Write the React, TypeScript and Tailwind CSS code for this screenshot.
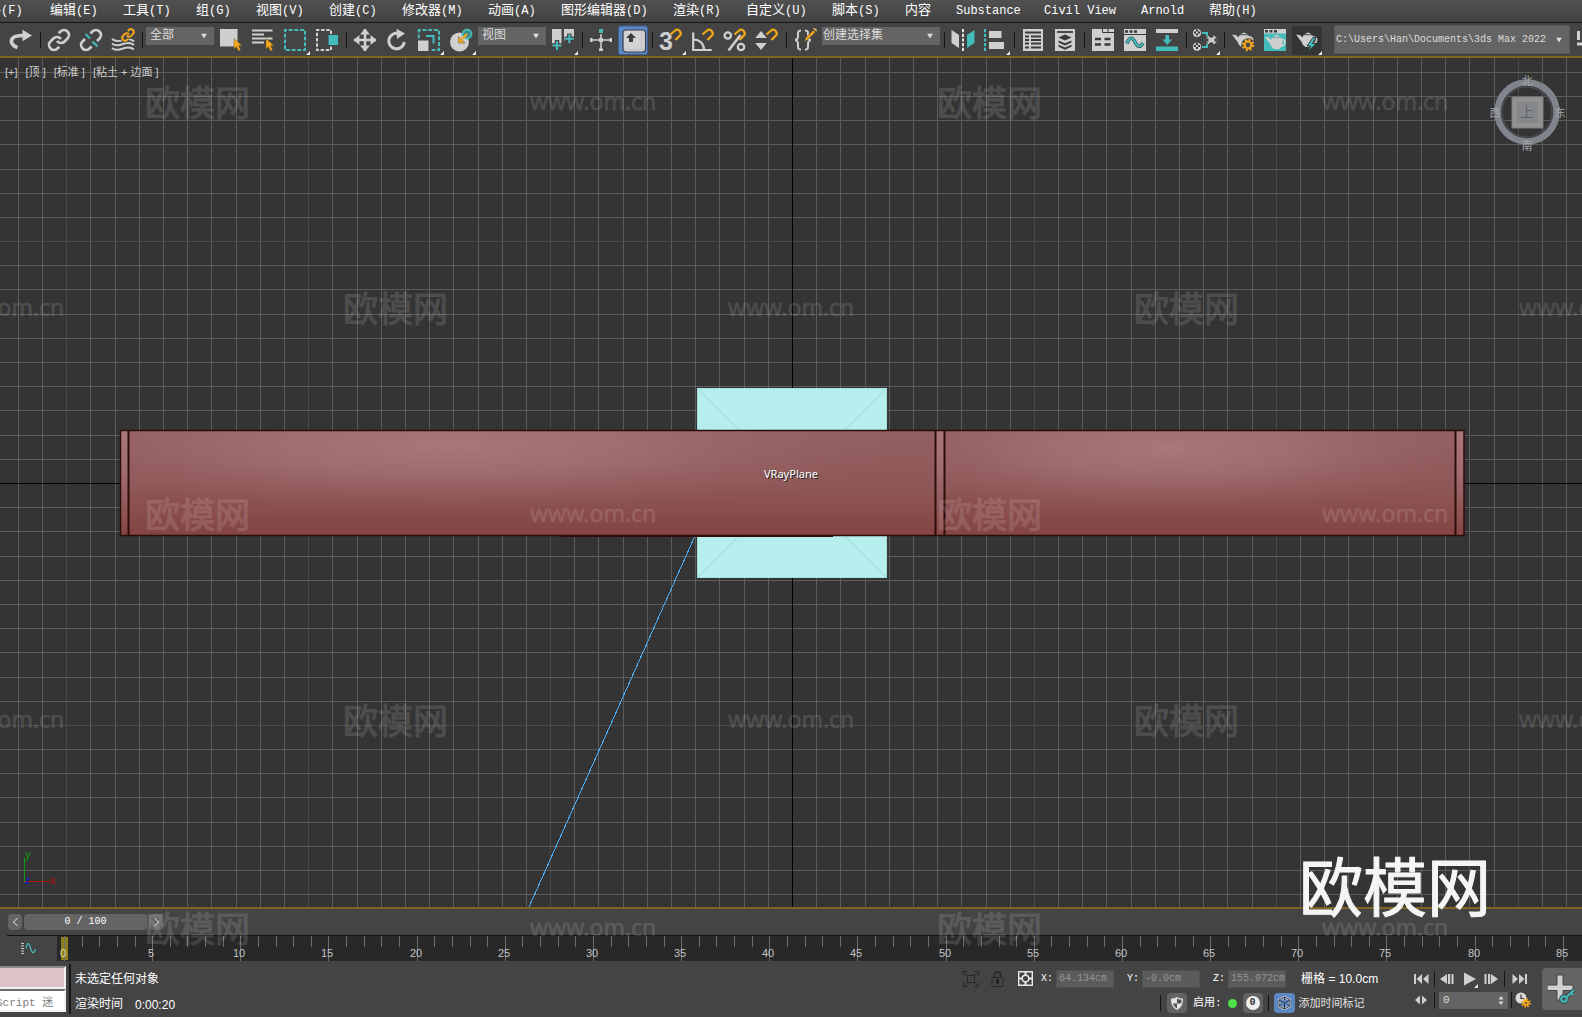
import { useState } from "react";
import type { ReactNode } from "react";
import clsx from "clsx";

const menus = [
  { label: "编辑", key: "(E)", width: "w-[73px]" },
  { label: "工具", key: "(T)", width: "w-[73px]" },
  { label: "组", key: "(G)", width: "w-[60px]" },
  { label: "视图", key: "(V)", width: "w-[73px]" },
  { label: "创建", key: "(C)", width: "w-[73px]" },
  { label: "修改器", key: "(M)", width: "w-[86px]" },
  { label: "动画", key: "(A)", width: "w-[73px]" },
  { label: "图形编辑器", key: "(D)", width: "w-[112px]" },
  { label: "渲染", key: "(R)", width: "w-[73px]" },
  { label: "自定义", key: "(U)", width: "w-[86px]" },
  { label: "脚本", key: "(S)", width: "w-[73px]" },
  { label: "内容", key: "", width: "w-[51px]" },
  { label: "", key: "Substance", width: "w-[88px]" },
  { label: "", key: "Civil View", width: "w-[97px]" },
  { label: "", key: "Arnold", width: "w-[68px]" },
  { label: "帮助", key: "(H)", width: "w-[73px]" },
];

const G = "#cfcfcf";
const T = "#45bcbc";
const O = "#f5a81c";
const D = "#3a3a3a";

type ToolProps = {
  label: string;
  children: ReactNode;
  flyout?: boolean;
  className?: string;
};

function Tool({ label, children, flyout, className }: ToolProps) {
  return (
    <button type="button" aria-label={label} title={label} className={clsx("h-8 w-8 shrink-0", className)}>
      <svg viewBox="0 0 32 32" className="block h-8 w-8" fill="none">
        {children}
        {flyout && <path d="M31 27v4h-4z" fill="#e8e8e8" />}
      </svg>
    </button>
  );
}

function Sep() {
  return (
    <div className="flex w-[6px] shrink-0 justify-center">
      <div className="h-4 w-px bg-[#151515]" />
    </div>
  );
}

type PickerProps = { label: string; value: string; className: string; selectClass: string };

function Picker({ label, value, className, selectClass }: PickerProps) {
  return (
    <div className={clsx("relative bg-[#646464]", className)}>
      <select aria-label={label} className={clsx("block h-full w-full appearance-none text-[#dcdcdc] outline-none", selectClass)}>
        <option>{value}</option>
      </select>
      <svg viewBox="0 0 6 5" className="pointer-events-none absolute top-1/2 right-[7px] h-[5px] w-[6px] -translate-y-1/2">
        <path d="M0 0h6l-3 5z" fill="#dedede" />
      </svg>
    </div>
  );
}

function Magnet() {
  return (
    <g>
      <path d="M15.5 10.500l4.600-4a3.500 3.500 0 0 1 4.800 5L20.500 16" stroke="#444" strokeWidth="4" />
      <path d="M15.5 10.500l4.600-4a3.500 3.500 0 0 1 4.800 5L20.500 16" stroke={O} strokeWidth="2.200" />
    </g>
  );
}

function Cursor() {
  return <path d="M19 14.5v10.2l2.4-2 2 4.4 2.3-1.1-2-4.3h3.3z" fill={O} stroke="#5a4a20" strokeWidth=".4" />;
}

function ChainLink() {
  return (
    <>
      <path d="M10 13a5 5 0 0 0 7.54.54l3-3a5 5 0 0 0-7.07-7.07l-1.72 1.71" />
      <path d="M14 11a5 5 0 0 0-7.54-.54l-3 3a5 5 0 0 0 7.07 7.07l1.71-1.71" />
    </>
  );
}

// drawn in a 22x16 box
function Teapot() {
  return (
    <g fill={G}>
      <path d="M0 2.5l4.300.7c.8 1 1.400 1.800 2 2.300C6.600 4.500 7.200 3.700 8 3h8c3 3.500 3 8-1 12H9.500C7 13.400 5.800 11.400 5.300 9.200 3.300 8 2.300 5 0 2.500z" />
      <path d="M16.500 5.500c5.500-2 5.500 6.500-.5 6.500" fill="none" stroke={G} strokeWidth="1.800" />
      <path d="M8.500 2.300C9.500 1.500 10.300 1 11.300.9a1 1 0 0 1 1.600 0c1 .1 1.800.6 2.600 1.400z" />
      <path d="M8 3.200h8" stroke="#8a8a8a" strokeWidth=".6" />
    </g>
  );
}

function Gear({ cx, cy, r }: { cx: number; cy: number; r: number }) {
  return (
    <g>
      <circle cx={cx} cy={cy} r={r} stroke={O} strokeWidth="2.4" strokeDasharray={`${(Math.PI * r) / 8} ${(Math.PI * r) / 8}`} />
      <circle cx={cx} cy={cy} r={r - 1.6} stroke={O} strokeWidth="2" fill="#4a4a4a" />
    </g>
  );
}

function MenuBar() {
  return (
    <nav className="flex h-[22px] shrink-0 items-center overflow-hidden bg-linear-to-b from-[#505050] to-[#424242] pb-[2px] text-white">
      <button type="button" className="-ml-3 w-[62px] shrink-0 text-left leading-5 whitespace-nowrap">
        <span className="text-[13px]">件</span>
        <span className="text-xs">(F)</span>
      </button>
      {menus.map((m) => (
        <button key={m.label + m.key} type="button" className={clsx("shrink-0 text-left leading-5 whitespace-nowrap", m.width)}>
          {m.label && <span className="text-[13px]">{m.label}</span>}
          {m.key && <span className="text-xs">{m.key}</span>}
        </button>
      ))}
    </nav>
  );
}

function Toolbar() {
  return (
    <div className="flex h-[34px] shrink-0 items-center overflow-hidden border-t border-[#161616] bg-[#444444] pl-[5px]">
      <Tool label="重做">
        <path d="M12.5 23.5C6 21.5 5 16.5 8 13.8c2-1.8 4-2.3 10-2.3" stroke={G} strokeWidth="3.6" />
        <path d="M17.5 5.8l9.5 5.7-9.5 5.7z" fill={G} />
      </Tool>
      <Sep />
      <Tool label="链接">
        <g transform="translate(4 4)" stroke={G} strokeWidth="2.7"><ChainLink /></g>
      </Tool>
      <Tool label="取消链接">
        <g transform="translate(4 4)" stroke={G} strokeWidth="2.7">
          <path d="M18 13l2.5-2.5a5 5 0 0 0-7.07-7.07l-2 2M6 11l-2.5 2.5a5 5 0 0 0 7.07 7.07l2-2" />
        </g>
        <path d="M10.500 10l4.500 4.500M17.500 17.500l5 5" stroke={T} strokeWidth="2" />
      </Tool>
      <Tool label="绑定到空间扭曲">
        <g stroke={G} strokeWidth="1.9">
          <path d="M5 15c3.500 3 7 2 10 1.500s8-3 12 1" />
          <path d="M5 19.500c3.500 3 7 2 11 .5s8-1.500 11 1" />
          <path d="M5 24c3.500 3 7 2 11 .5s8-1.500 11 1" />
        </g>
        <g transform="translate(14 4) scale(.58)" stroke="#444" strokeWidth="6"><ChainLink /></g>
        <g transform="translate(14 4) scale(.58)" stroke={O} strokeWidth="3.4"><ChainLink /></g>
      </Tool>
      <Sep />
      <Picker label="选择过滤器" value="全部" className="mx-px mt-1 h-[18px] w-[68px] shrink-0 self-start" selectClass="pl-1 pr-4 text-xs" />
      <Tool label="选择对象">
        <path d="M5 5h17.500v17.500H5z" fill={G} />
        <Cursor />
      </Tool>
      <Tool label="按名称选择">
        <path d="M5 6.500h20.500M5 10.500h12M5 14.500h20.500M5 18.500h12" stroke={G} strokeWidth="2" />
        <Cursor />
      </Tool>
      <Tool label="矩形选择区域" flyout>
        <path d="M6 6h20v20H6z" stroke={T} strokeWidth="2" strokeDasharray="4 1.71" strokeDashoffset="2" />
      </Tool>
      <Tool label="窗口/交叉">
        <path d="M20 10V6H6v20h14v-4" stroke={G} strokeWidth="2" strokeDasharray="3.5 1.7" />
        <path d="M17.500 11h9.500v10h-9.500z" fill={T} />
      </Tool>
      <Sep />
      <Tool label="选择并移动">
        <path d="M16 5v22M5 16h22" stroke={G} strokeWidth="2.6" />
        <path d="M16 4.500l5 6H11zM16 27.500l5-6H11zM4.500 16l6-5v10zM27.500 16l-6-5v10z" fill={G} />
      </Tool>
      <Tool label="选择并旋转">
        <path d="M17.500 9.500A7.800 7.800 0 1 0 23.300 18" stroke={G} strokeWidth="3" />
        <path d="M15.500 4.800l8.500 4.700-8 5.500z" fill={G} />
      </Tool>
      <Tool label="选择并缩放" flyout>
        <path d="M5.800 6h20.200v20H5.800z" stroke={T} strokeWidth="2" strokeDasharray="4 1.71" strokeDashoffset="2" />
        <path d="M4 15h13v13H4z" fill="#444" />
        <path d="M5 16.500h10.500v10.500H5z" fill={G} />
        <path d="M13 12h7.500v7.500" stroke={T} strokeWidth="2" />
      </Tool>
      <Tool label="选择并放置" flyout>
        <circle cx="14.500" cy="18" r="9.500" fill={G} />
        <circle cx="22" cy="10" r="4.500" fill="#3c8b8b" stroke={T} strokeWidth="1.8" />
        <path d="M22 10l-5 5" stroke={O} strokeWidth="2.400" />
        <path d="M13.500 12.500v6.500H20z" fill={O} stroke="#6b5320" strokeWidth=".5" />
      </Tool>
      <Picker label="参考坐标系" value="视图" className="mx-px mt-1 h-[18px] w-[68px] shrink-0 self-start" selectClass="pl-1 pr-4 text-xs" />
      <Tool label="使用轴点中心" flyout>
        <path d="M5 5h9.500v15H5zM17 5h10v12H17z" fill={G} />
        <path d="M10 16v11M5 21.500h10M22.300 9.500v10.500M17.500 14.700h10" stroke="#444" strokeWidth="4.5" />
        <path d="M10 17v9M5.500 21.500h9M22.300 10.200v9M17.800 14.700h9" stroke={T} strokeWidth="2" />
      </Tool>
      <Sep />
      <Tool label="选择并操纵">
        <path d="M16 10v16M6 16h20" stroke={G} strokeWidth="1.6" />
        <path d="M5 14h2.500v4H5zM24.500 14h2.500v4h-2.500zM14 24.500h4V27h-4zM14 14h4v4h-4z" fill={G} />
        <path d="M14 5h4v4h-4z" fill={T} />
      </Tool>
      <Tool label="键盘快捷键覆盖切换">
        <rect x="1.5" y="2" width="29" height="28.5" rx="2" fill="#5b87c3" stroke="#3d5f92" />
        <rect x="6" y="6" width="22.5" height="22" rx="3" fill="#d2d2d2" stroke="#3a3f48" strokeWidth="1.2" />
        <path d="M7 24.500c4 2 16 2 20.500 0M24.500 7v18" stroke="#bcbcbc" />
        <path d="M14 9l5 5h-3v4h-4v-4H9z" fill="#3b3b3b" />
      </Tool>
      <Sep />
      <Tool label="捕捉开关" flyout>
        <text x="4" y="26" className="font-['Liberation_Sans',sans-serif] text-[25px] font-bold" fill={G}>3</text>
        <Magnet />
      </Tool>
      <Tool label="角度捕捉">
        <path d="M6.200 8.500V26h18.500M6.500 15.500C13 15.500 17 20 17 26" stroke={G} strokeWidth="2.2" />
        <Magnet />
      </Tool>
      <Tool label="百分比捕捉">
        <circle cx="8.8" cy="11.5" r="3.2" stroke={G} strokeWidth="2.3" />
        <circle cx="22" cy="23" r="3.2" stroke={G} strokeWidth="2.3" />
        <Magnet />
        <path d="M21.500 11L9.500 26.500" stroke={G} strokeWidth="2.6" />
      </Tool>
      <Tool label="微调器捕捉">
        <path d="M10 7l5.800 7H4.200zM10 26l5.800-7H4.200z" fill={G} />
        <Magnet />
      </Tool>
      <Sep />
      <Tool label="编辑命名选择集">
        <path d="M12 6.500c-3.500 0-3 2-3 5s-.5 4.500-3 4.500c2.500 0 3 1.500 3 4.500s-.5 5 3 5M16 6.500c3.500 0 3 2 3 5s.5 4.500 3 4.500c-2.500 0-3 1.500-3 4.500s.5 5-3 5" stroke={G} strokeWidth="2" />
        <path d="M15.500 17.500l1-3.500 8-8 2 2-8 8z" fill={O} stroke="#444" strokeWidth=".6" />
        <path d="M24 4.500l3.500 3 .5-1.500-2.500-2z" fill="#f7c86a" />
      </Tool>
      <Picker label="命名选择集" value="创建选择集" className="mx-px mt-1 h-[18px] w-[118px] shrink-0 self-start" selectClass="pl-px pr-4 text-xs" />
      <Sep />
      <Tool label="镜像">
        <path d="M4.500 6l7.500 5v13l-7.500-5z" fill={G} />
        <path d="M27.500 6L20 11v13l7.500-5z" fill={T} />
        <path d="M16 5v22" stroke="#e4e4e4" strokeWidth="2" strokeDasharray="3.2 1.5" />
      </Tool>
      <Tool label="对齐" flyout>
        <path d="M6 5v22" stroke={T} strokeWidth="2" strokeDasharray="3.2 1.5" />
        <path d="M10 7h12.500v7H10zM10 18h15v7H10z" fill={G} />
      </Tool>
      <Sep />
      <Tool label="场景资源管理器">
        <path d="M6 5h20v22H6z" fill={G} />
        <path d="M8 8.500h16M8 12.500h4M14 12.500h10M8 16h4M14 16h10M8 19.500h4M14 19.500h10M8 23.500h4M14 23.500h10" stroke={D} strokeWidth="1.8" />
      </Tool>
      <Tool label="层资源管理器">
        <path d="M6 5h20v22H6z" fill={G} />
        <path d="M8 8h16" stroke={D} strokeWidth="1.8" />
        <path d="M16 10.500l6.500 3-6.500 3-6.500-3zM9.500 16.500l6.500 2.700 6.500-2.700v2L16 21.500l-6.500-3zM9.500 20.800l6.500 2.700 6.500-2.700v2L16 25.800l-6.500-3z" fill={D} />
      </Tool>
      <Sep />
      <Tool label="切换功能区">
        <path d="M5 5h22v22H5z" fill={G} />
        <path d="M15.500 4v4.500H27M21 4v4.500" stroke={D} />
        <path d="M8 15h6M17.500 15h6M8 20.500h6M17.500 20.500h6" stroke={D} strokeWidth="2.6" />
      </Tool>
      <Tool label="曲线编辑器">
        <path d="M5 5h22v22H5z" fill={G} />
        <path d="M6 7.500h3M10.500 7.500h3M15 7.500h3" stroke={D} strokeWidth="2.6" />
        <path d="M5 10.500h22" stroke={D} />
        <path d="M8 19.500c2.500-7 5.500-6.500 8-1.500s5 6 8 1" stroke="#2d5858" strokeWidth="3.6" />
        <path d="M8 19.500c2.500-7 5.500-6.500 8-1.500s5 6 8 1" stroke={T} strokeWidth="2" />
      </Tool>
      <Tool label="图解视图">
        <path d="M5 5h22v4H5z" fill={G} />
        <path d="M5 22.500h22V27H5z" fill={T} />
        <path d="M14.500 11h3.500v4.500h3L16.200 21l-4.700-5.500h3z" fill={T} />
      </Tool>
      <Sep />
      <Tool label="材质编辑器" flyout>
        <path d="M13 9h5v3.500M13 23h5v-3.500" stroke={T} strokeWidth="2" />
        <circle cx="8" cy="9" r="4" fill={G} />
        <circle cx="8" cy="22.700" r="4" fill={G} />
        <circle cx="22.500" cy="16" r="5" fill={G} />
        <path d="M5 7.500h2v2H5zM9 7.500h2v2H9zM7 5.500h2v2H7zM7 9.500h2v2H7zM5 21h2v2H5zM9 21h2v2H9zM7 19h2v2H7zM7 23h2v2H7zM20.300 11h4v2.500h-4zM20.300 18.500h4V21h-4zM17.500 14.500h2v3h-2zM25.500 14.500h2v3h-2z" fill={D} />
      </Tool>
      <Sep />
      <Tool label="渲染设置">
        <g transform="translate(5 8)"><Teapot /></g>
        <circle cx="21" cy="21" r="6.800" fill="#444" />
        <Gear cx={21} cy={21} r={5} />
      </Tool>
      <Tool label="渲染帧窗口">
        <path d="M5 5h22v22H5z" fill={T} />
        <path d="M5 5h22v4.500H5z" fill={G} />
        <path d="M6 7.200h3M10.500 7.200h3M15 7.200h3" stroke={D} strokeWidth="2.6" />
        <g transform="translate(6 10.500) scale(.97)"><Teapot /></g>
      </Tool>
      <Tool label="渲染产品" flyout>
        <rect x="1" y="2" width="30" height="29" rx="2" fill="#343434" />
        <g transform="translate(5 8)"><Teapot /></g>
        <path d="M22 13.500l-6 8.500h3.500l-2.500 5.500 8.500-8h-4l3.500-6z" fill={T} stroke="#343434" strokeWidth="1" />
      </Tool>
      <div className="mr-[3px] ml-[3px] h-[27px] w-[5px] shrink-0 bg-[radial-gradient(#9c9c9c_45%,transparent_50%)] bg-size-[2px_2px]" />
      <Picker label="项目文件夹" value="C:\Users\Han\Documents\3ds Max 2022" className="h-[29px] min-w-0 flex-1 border border-[#575757]" selectClass="pl-px pr-2 text-[10px]" />
      <button type="button" aria-label="设置项目" className="ml-1 h-8 w-2 shrink-0 overflow-hidden">
        <svg viewBox="0 0 8 32" className="h-8 w-2" fill="none">
          <path d="M4.500 7v9M3 20h5" stroke={G} strokeWidth="3" />
        </svg>
      </button>
    </div>
  );
}

// the home grid is 24.19px, measured from the world origin at 792,483
const ORIGIN_X = 792;
const ORIGIN_Y = 483;
const CELL = 24.19;
const columns = Array.from({ length: 65 }, (_, i) => i - 32);
const rows = Array.from({ length: 35 }, (_, i) => i - 17);

function GridLines() {
  return (
    <g shapeRendering="crispEdges">
      {columns.filter((n) => n !== 0).map((n) => (
        <rect key={n} x={Math.round(ORIGIN_X + n * CELL)} y="58" width="1" height="849" fill={n % 10 === 0 ? "#4a4a4a" : "#5c5c5c"} />
      ))}
      {rows.filter((n) => n !== 0).map((n) => (
        <rect key={n} x="0" y={Math.round(ORIGIN_Y + n * CELL)} width="1582" height="1" fill={n % 10 === 0 ? "#4a4a4a" : "#5c5c5c"} />
      ))}
      <rect x={ORIGIN_X} y="58" width="1" height="849" fill="#000" />
      <rect x="0" y={ORIGIN_Y} width="1582" height="1" fill="#000" />
    </g>
  );
}

function Scene() {
  return (
    <svg viewBox="0 58 1582 849" preserveAspectRatio="xMidYMid slice" className="block h-full w-full">
      <defs>
        <linearGradient id="body" x1="0" y1="0" x2="0" y2="1">
          <stop offset="0" stopColor="#936061" />
          <stop offset=".5" stopColor="#8f5858" />
          <stop offset=".85" stopColor="#874a49" />
          <stop offset="1" stopColor="#834542" />
        </linearGradient>
        <linearGradient id="edge" x1="0" y1="0" x2="0" y2="1">
          <stop offset="0" stopColor="#aa777a" />
          <stop offset=".4" stopColor="#a06c6e" />
          <stop offset="1" stopColor="#844543" />
        </linearGradient>
        <radialGradient id="shine">
          <stop offset="0" stopColor="#a87779" />
          <stop offset=".4" stopColor="#a37073" stopOpacity=".8" />
          <stop offset="1" stopColor="#966062" stopOpacity="0" />
        </radialGradient>
        <clipPath id="left"><path d="M129 431h806v105H129z" /></clipPath>
        <clipPath id="right"><path d="M945 431h510v105H945z" /></clipPath>
      </defs>
      <GridLines />
      <path d="M697 388h190v190H697z" fill="#b5eeec" />
      <path d="M697 388l190 190M887 388L697 578" stroke="#a2dcda" strokeWidth="1" />
      <path d="M697.500 388v190M886.500 388v190M697 388.500h190M697 577.500h190" stroke="#a4e3e0" />
      <path d="M694.500 537L529 907" stroke="#4ab0f7" shapeRendering="crispEdges" />
      <g>
        <path d="M120 430h1344v106H120z" fill="url(#body)" />
        <ellipse cx="450" cy="446" rx="460" ry="66" fill="url(#shine)" clipPath="url(#left)" />
        <ellipse cx="1170" cy="448" rx="320" ry="66" fill="url(#shine)" clipPath="url(#right)" />
        <path d="M120 430h8v106h-8zM936 430h8v106h-8zM1456 430h8v106h-8z" fill="url(#edge)" />
        <path d="M120.500 430.500h1343.500v105h-1343.500z" fill="none" stroke="#2c0d0c" strokeWidth="1.500" />
        <path d="M128.500 430v106M935.500 430v106M944.500 430v106M1455.500 430v106" stroke="#2c0d0c" strokeWidth="2" />
        <path d="M561 536.500h272" stroke="#2c0d0c" strokeWidth="1" />
      </g>
      <g className="font-['Noto_Sans',sans-serif] text-[11px]">
        <text x="765" y="479" fill="#262626">VRayPlane</text>
        <text x="764" y="478" fill="#ffffff">VRayPlane</text>
      </g>
      <g className="font-['Noto_Sans',sans-serif] text-[11px]">
        <path d="M24.500 857v25" stroke="#0f9a0f" />
        <path d="M25 881.500h26" stroke="#b00f0f" />
        <text x="25" y="858" fill="#0f9a0f">y</text>
        <text x="50" y="884" fill="#b00f0f">x</text>
        <text x="25" y="884" fill="#1414d8">z</text>
      </g>
      <g fill="none">
        <circle cx="1527" cy="112" r="29.500" stroke="#80848c" strokeWidth="6.500" />
        <circle cx="1527" cy="112" r="25" stroke="#4b4c50" strokeWidth="1.500" />
        <path d="M1512 97h31v31h-31z" fill="#929292" stroke="#7e7e7e" />
        <path d="M1517 102h21v21h-21z" fill="#85878c" />
      </g>
      <g className="font-['Noto_Sans_CJK_SC',sans-serif] text-[11px]" fill="#a6a6a6" textAnchor="middle">
        <text x="1527" y="85">北</text>
        <text x="1527" y="150">南</text>
        <text x="1495" y="117">西</text>
        <text x="1560" y="117">东</text>
        <text x="1527" y="117" fill="#5d626c" className="text-[14px]">上</text>
      </g>
    </svg>
  );
}

function Viewport() {
  return (
    <main className="relative min-h-0 flex-1 overflow-hidden border-y-2 border-[#7d6622] bg-[#343434]">
      <Scene />
      <div className="absolute top-[6px] left-[5px] flex gap-2 text-[11px] leading-4 text-[#cfcfcf] font-['Liberation_Sans','Noto_Sans_CJK_SC',sans-serif]">
        <button type="button">[+]</button>
        <button type="button">[顶 ]</button>
        <button type="button">[标准 ]</button>
        <button type="button">[粘土 + 边面 ]</button>
      </div>
    </main>
  );
}

const FRAME = 17.633;

function TimeRuler() {
  const frames = Array.from({ length: 86 }, (_, i) => i);
  return (
    <svg className="block h-[25px] min-w-0 flex-1 bg-[#282828] font-['Liberation_Sans',sans-serif] text-[11px]">
      <g shapeRendering="crispEdges">
        <rect x="4" y="1" width="7" height="23" fill="#8b821f" />
        {frames.map((f) => (
          <rect key={f} x={Math.round(7 + f * FRAME)} y="0" width="1" height={f % 5 === 0 ? 25 : 11} fill="#6e6e6e" />
        ))}
      </g>
      {frames.filter((f) => f % 5 === 0).map((f) => (
        <text key={f} x={Math.round(6 + f * FRAME)} y="21" textAnchor="middle" fill={f === 0 ? "#e6dfa0" : "#c4c4c4"}>{f}</text>
      ))}
    </svg>
  );
}

function Timeline() {
  return (
    <div className="flex h-[52px] shrink-0 bg-[#444444]">
      <div className="mt-[7px] mr-1 h-[43px] w-[3px] shrink-0 bg-[radial-gradient(#9c9c9c_45%,transparent_50%)] bg-size-[2px_2px]" />
      <div className="flex min-w-0 flex-1 flex-col">
        <div className="flex h-[26px] items-center gap-[2px] pb-1 pl-px pt-1 font-['Liberation_Mono',monospace] text-[10px] text-white">
          <button type="button" aria-label="上一帧" className="flex h-4 w-[14px] items-center justify-center rounded-sm bg-[#646464]">
            <svg viewBox="0 0 5 8" className="h-2 w-[5px]" fill="none"><path d="M4.500 0l-4 4 4 4" stroke="#eee" /></svg>
          </button>
          <button type="button" className="h-4 w-[123px] rounded-sm bg-[#646464] text-center leading-4">0 / 100</button>
          <button type="button" aria-label="下一帧" className="flex h-4 w-[14px] items-center justify-center rounded-sm bg-[#646464]">
            <svg viewBox="0 0 5 8" className="h-2 w-[5px]" fill="none"><path d="M.5 0l4 4-4 4" stroke="#eee" /></svg>
          </button>
        </div>
        <div className="flex border-t border-[#141414]">
          <button type="button" aria-label="迷你曲线编辑器" className="flex h-[25px] w-[50px] shrink-0 items-center pl-[14px]">
            <svg viewBox="0 0 15 11" className="h-[11px] w-[15px]" fill="none">
              <path d="M0 .5h3M0 3h3M0 5.500h3M0 8h3M0 10.500h3" stroke={G} />
              <path d="M5 5.500C6.500-1 8-1 9.500 5s3.500 6 5 1" stroke={T} strokeWidth="1.200" />
            </svg>
          </button>
          <TimeRuler />
        </div>
      </div>
    </div>
  );
}

function Coord({ axis, value }: { axis: string; value: string }) {
  const [val, setVal] = useState(value);
  return (
    <label className="flex items-center gap-[3px] text-[10px] text-white">
      {axis}:
      <input
        value={val}
        onChange={(e) => setVal(e.target.value)}
        className="h-[18px] w-[58px] border border-[#505050] bg-[#5b5b5b] pl-[2px] text-[#949494] outline-none"
      />
    </label>
  );
}

function PlayButton({ label, d, flyout }: { label: string; d: string; flyout?: boolean }) {
  return (
    <button type="button" aria-label={label} className="h-[18px] w-[18px]">
      <svg viewBox="0 0 18 18" className="h-[18px] w-[18px]">
        <path d={d} fill={G} />
        {flyout && <path d="M18 14v4h-4z" fill="#e8e8e8" />}
      </svg>
    </button>
  );
}

function StatusBar() {
  const [frame, setFrame] = useState("0");
  const [listener, setListener] = useState("Script 迷");
  return (
    <footer className="flex h-14 shrink-0 overflow-hidden bg-[#444444] text-xs text-white">
      <div className="mt-[5px] flex w-[66px] shrink-0 flex-col">
        <input aria-label="宏录制器" className="h-[23px] w-full border-2 border-l-0 border-[#f2f2f2] border-t-[#8a8a8a] bg-[#dcc3c5] outline-none" />
        <input
          aria-label="MAXScript 侦听器"
          value={listener}
          onChange={(e) => setListener(e.target.value)}
          className="h-[23px] w-full -indent-1 border-2 border-l-0 border-[#f2f2f2] border-t-[#6a6a6a] bg-white pr-1 text-[11px] text-[#7c7c7c] outline-none"
        />
      </div>
      <div className="mt-[3px] ml-[3px] h-[50px] w-[2px] shrink-0 bg-[#161616]" />
      <div className="ml-1 pt-[7px] leading-[25px] whitespace-nowrap">
        <p>未选定任何对象</p>
        <p className="flex gap-3">
          <span>渲染时间</span>
          <span className="font-['Liberation_Sans',sans-serif]">0:00:20</span>
        </p>
      </div>

      <div className="ml-auto flex w-[445px] shrink-0 flex-col pt-[6px]">
        <div className="flex h-[23px] items-center">
          <button type="button" aria-label="孤立当前选择" className="mr-3">
            <svg viewBox="0 0 16 16" className="h-4 w-4" fill="none" stroke="#252525">
              <path d="M4.500 4.500h7v7h-7zM.5 4.500v-4h4M11.500.5h4v4M15.500 11.500v4h-4M4.500 15.500h-4v-4" />
              <path d="M2 2l2.500 2.500M14 2l-2.500 2.500M14 14l-2.500-2.500M2 14l2.500-2.500" />
            </svg>
          </button>
          <button type="button" aria-label="选择锁定" className="mr-[14px]">
            <svg viewBox="0 0 13 16" className="h-4 w-[13px]" fill="none">
              <path d="M3.500 7V4a3 3 0 0 1 6 0v3" stroke="#252525" strokeWidth="1.500" />
              <rect x="1" y="6.500" width="11" height="9" rx="1" stroke="#252525" />
              <path d="M6.500 9v4M5 9.500h3" stroke="#1a1a1a" strokeWidth="2" />
            </svg>
          </button>
          <button type="button" aria-label="绝对模式变换输入" className="mr-2">
            <svg viewBox="0 0 15 15" className="h-[15px] w-[15px]" fill="none">
              <path d="M.7.7h13.600v13.600H.7z" stroke="#e8e8e8" strokeWidth="1.400" />
              <circle cx="7.500" cy="7.500" r="3.300" stroke="#e8e8e8" strokeWidth="1.500" />
              <path d="M7.500 1v3M7.500 11v3M1 7.500h3M11 7.500h3" stroke="#e8e8e8" strokeWidth="2" />
            </svg>
          </button>
          <div className="flex gap-[13px]">
            <Coord axis="X" value="64.134cm" />
            <Coord axis="Y" value="-0.0cm" />
            <Coord axis="Z" value="155.972cm" />
          </div>
          <div className="ml-[15px] whitespace-nowrap font-['Liberation_Sans','Noto_Sans_CJK_SC',sans-serif]">栅格 = 10.0cm</div>
        </div>
        <div className="flex h-[26px] items-center pl-[197px] text-[11px]">
          <div className="mr-[6px] h-4 w-px bg-[#111]" />
          <button type="button" aria-label="安全" className="mr-[6px] flex h-5 w-5 items-center justify-center rounded-sm bg-[#626262]">
            <svg viewBox="0 0 12 13" className="h-[13px] w-3">
              <path d="M6 0c2 1.200 4 1.700 6 1.700 0 5-1.500 9-6 11.300C1.500 10.700 0 6.700 0 1.700 2 1.700 4 1.200 6 0z" fill="#e2e2e2" />
              <path d="M6 1.500c1.500.8 3 1.200 4.700 1.300-.1 1.400-.3 2.700-.7 3.700H6zM6 6.500v5C3.800 10.300 2.600 8.600 2 6.500z" fill="#555" />
            </svg>
          </button>
          <span className="mr-1">启用:</span>
          <span className="mr-[6px] ml-[2px] h-[9px] w-[9px] rounded-full bg-[#4fe04a]" />
          <button type="button" aria-label="警告数" className="flex h-5 w-5 items-center justify-center rounded-sm bg-[#626262]">
            <span className="flex h-[14px] w-[14px] items-center justify-center rounded-full bg-[#f0f0f0] text-[10px] font-bold text-[#333]">0</span>
          </button>
          <div className="mx-[5px] h-4 w-px bg-[#111]" />
          <button type="button" aria-label="时间标记" className="mr-1 flex h-5 w-[21px] items-center justify-center rounded-sm bg-[#5b87c3]">
            <svg viewBox="0 0 13 14" className="h-[14px] w-[13px]" fill="none" stroke="#2b3648">
              <path d="M6.500 1L12 4v6l-5.500 3L1 10V4z" stroke="#d5dbe4" strokeWidth="2.400" />
              <path d="M6.500 1L12 4v6l-5.500 3L1 10V4zM1 4l5.500 3L12 4M6.500 7v6M6.500 1v3M3.500 8.500L1 10M9.500 8.500L12 10" />
            </svg>
          </button>
          <button type="button" className="pt-[2px] text-[#e2e2e2]">添加时间标记</button>
        </div>
      </div>

      <div className="ml-1 flex w-[120px] shrink-0 flex-col pt-[7px]">
        <div className="flex h-[21px] items-center">
          <PlayButton label="转至开头" d="M2 4h2v10H2zM10 4v10L4.500 9zM16.500 4v10L11 9z" />
          <div className="mx-1 h-4 w-px bg-[#161616]" />
          <PlayButton label="上一帧" d="M8 4v10L1 9zM9 4h2.200v10H9zM12.500 4h2v10h-2z" />
          <div className="ml-[3px]" />
          <PlayButton label="播放" d="M4 2.500L16 9 4 15.500z" flyout />
          <div className="ml-[3px]" />
          <PlayButton label="下一帧" d="M3.500 4h2v10h-2zM7 4h2.200v10H7zM10 4l7 5-7 5z" />
          <div className="mx-[5px] h-4 w-px bg-[#161616]" />
          <PlayButton label="转至结尾" d="M2.500 4L8 9l-5.500 5zM9 4l5.500 5L9 14zM15 4h2v10h-2z" />
        </div>
        <div className="flex h-[22px] items-center">
          <PlayButton label="关键点模式" d="M8 4.500v9L3 9zM10 4.500v9L15 9z" />
          <div className="mx-1 h-4 w-px bg-[#161616]" />
          <label className="flex h-[17px] w-[69px] shrink-0 items-center bg-[#646464]">
            <input
              aria-label="当前帧"
              value={frame}
              onChange={(e) => setFrame(e.target.value)}
              className="w-full min-w-0 bg-transparent pl-1 text-[11px] text-[#dcdcdc] outline-none"
            />
            <svg viewBox="0 0 6 9" className="mr-1 h-[9px] w-[6px] shrink-0">
              <path d="M3 0l2.500 3.500h-5zM3 9l2.500-3.500h-5z" fill="#d8d8d8" />
            </svg>
          </label>
          <div className="mx-[3px] h-4 w-px bg-[#161616]" />
          <button type="button" aria-label="时间配置">
            <svg viewBox="0 0 16 16" className="h-4 w-4" fill="none">
              <circle cx="6" cy="6" r="5.500" fill="#dcdcdc" />
              <path d="M6 2.500V6.500h3" stroke="#333" strokeWidth="1.200" />
              <Gear cx={11} cy={11} r={3.6} />
            </svg>
          </button>
        </div>
      </div>

      <button type="button" aria-label="设置关键点" className="mt-[7px] ml-[10px] flex h-[42px] w-10 shrink-0 items-center justify-center rounded-l-sm bg-[#646464]">
        <svg viewBox="0 0 30 30" className="h-[30px] w-[30px]" fill="none">
          <path d="M10 1h6v10h10v5.500H16V26h-6v-9.500H0V11h10z" fill={G} stroke="#444" strokeWidth="1" />
          <g stroke="#3a4a4a" strokeWidth="4"><circle cx="17" cy="25" r="2.800" /><path d="M19 23.500l8-7.500" /></g>
          <g stroke={T} strokeWidth="2"><circle cx="17" cy="25" r="2.800" /><path d="M19 23.500l8-7.500M24 18.500l2 2.500" /></g>
        </svg>
      </button>
    </footer>
  );
}

const brandMarks = [[146, 103], [938, 103], [344, 309], [1135, 309], [146, 515], [938, 515], [344, 721], [1135, 721], [146, 929], [938, 929]];
const siteMarks = [[530, 103], [1322, 103], [-62, 309], [728, 309], [1519, 309], [530, 515], [1322, 515], [-62, 721], [728, 721], [1519, 721], [530, 929], [1322, 929]];

function Watermarks() {
  return (
    <svg viewBox="0 0 1582 1017" preserveAspectRatio="xMidYMid slice" className="pointer-events-none absolute inset-0 h-full w-full">
      <g fill="#ffffff" stroke="#ffffff" opacity=".12" className="font-['Noto_Sans_CJK_SC',sans-serif] text-[35px]">
        {brandMarks.map(([x, y]) => (
          <text key={`${x}-${y}`} x={x - 1} y={y + 13}>欧模网</text>
        ))}
      </g>
      <g fill="#ffffff" stroke="#ffffff" strokeWidth=".5" opacity=".12" className="font-['Noto_Sans',sans-serif] text-[23px]">
        {siteMarks.map(([x, y]) => (
          <text key={`${x}-${y}`} x={x} y={y + 7}>www.om.cn</text>
        ))}
      </g>
      <text x="1299" y="911" fill="#f5f5f5" stroke="#f5f5f5" strokeWidth="1" strokeLinejoin="round" className="font-['Noto_Sans_CJK_SC',sans-serif] text-[64px]">
        欧模网
      </text>
    </svg>
  );
}

export default function App() {
  return (
    <div className="relative flex h-screen w-full flex-col overflow-hidden bg-[#444444] font-['Liberation_Mono','Noto_Sans_CJK_SC',monospace]">
      <MenuBar />
      <Toolbar />
      <Viewport />
      <Timeline />
      <StatusBar />
      <Watermarks />
    </div>
  );
}
